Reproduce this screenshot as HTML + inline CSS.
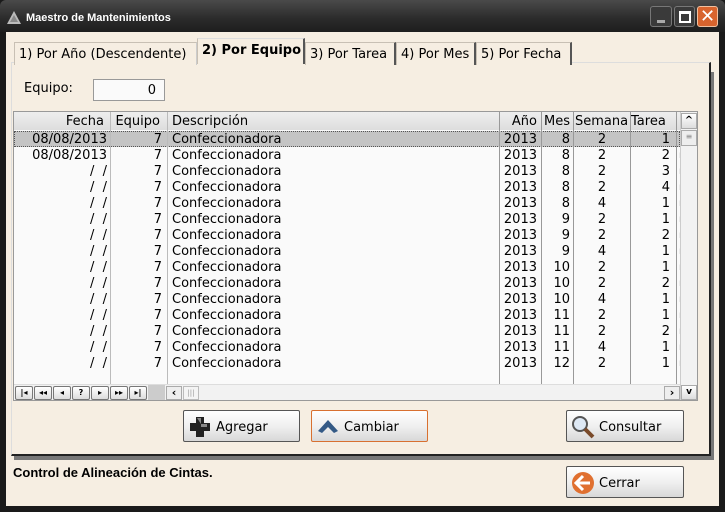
<!DOCTYPE html>
<html><head><meta charset="utf-8"><style>
*{margin:0;padding:0;box-sizing:border-box}
body{width:725px;height:512px;overflow:hidden;background:#1a1a1a;font-family:"DejaVu Sans","Liberation Sans",sans-serif;font-size:12px;color:#000;position:relative}
.a{position:absolute}
.title{left:0;top:0;width:725px;height:32px;background:linear-gradient(#4a4a4a,#2a2a2a 60%,#1e1e1e);border-radius:6px 6px 0 0}
.client{left:6px;top:32px;width:713px;height:474px;background:#f6eee2}
.tab{top:40px;height:23px;border:1px solid #c8c0b4;border-bottom:none;background:#f6eee2;padding:4px 4px 0;font-size:13px;white-space:nowrap;border-right:2px solid #555}
.btn{height:32px;border:1px solid #555;border-radius:2px;background:linear-gradient(#fff,#f0f0f0 50%,#d8d8d8);font-size:13px;padding:9px 0 0 0}
.row{position:absolute;left:14px;width:666px;height:16px;font-size:13px;overflow:hidden}
.c{position:absolute;top:1px;height:16px;line-height:16px;white-space:pre}
.nb{position:absolute;top:386px;width:18px;height:14px;border:1px solid #777;border-radius:2px;background:linear-gradient(#fff,#ddd);font-size:8px;text-align:center;line-height:12px;font-weight:bold}
</style></head><body>
<div class="a title"></div>
<svg class="a" style="left:7px;top:11px" width="14" height="13"><polygon points="7,0 14,13 0,13" fill="#bbb"/><polygon points="7,4 11,11 3,11" fill="#888"/></svg>
<div class="a" style="left:26px;top:12px;color:#fff;font-size:11px;font-weight:bold;font-family:'Liberation Sans',sans-serif">Maestro de Mantenimientos</div>
<div class="a" style="left:650px;top:6px;width:22px;height:21px;border:1px solid #777;border-radius:3px;background:#3a3a3a"><div class="a" style="left:6px;top:13px;width:8px;height:3px;background:#aaa"></div></div>
<div class="a" style="left:674px;top:6px;width:21px;height:21px;border:1px solid #777;border-radius:3px;background:#3a3a3a"><div class="a" style="left:4px;top:4px;width:12px;height:12px;border:2px solid #fff;border-top-width:3px"></div></div>
<div class="a" style="left:697px;top:6px;width:21px;height:21px;border:1px solid #f0c0a0;border-radius:3px;background:#d8642e;color:#fff;font-size:18px;font-weight:bold;text-align:center;line-height:19px">✕</div>
<div class="a client"></div>
<div class="a" style="left:14px;top:72px;width:700px;height:388px;background:#777"></div>
<div class="a" style="left:11px;top:62px;width:700px;height:394px;background:#f6eee2;border:1px solid #ddd;border-right:2px solid #222;border-bottom:2px solid #222"></div>
<div class="a tab" style="left:14px;top:42px;width:183px;border-right:1px solid #ccc">1) Por Año (Descendente)</div>
<div class="a tab" style="left:197px;top:38px;width:108px;height:26px;font-weight:bold;border-top:1px solid #ddd">2) Por Equipo</div>
<div class="a tab" style="left:305px;top:42px;width:91px">3) Por Tarea</div>
<div class="a tab" style="left:396px;top:42px;width:80px">4) Por Mes</div>
<div class="a tab" style="left:476px;top:42px;width:96px">5) Por Fecha</div>
<div class="a" style="left:24px;top:81px;font-size:13px">Equipo:</div>
<div class="a" style="left:93px;top:79px;width:72px;height:22px;border:1px solid #999;background:#fafafa;text-align:right;padding:3px 8px;font-size:13px">0</div>
<div class="a" style="left:13px;top:111px;width:685px;height:290px;border:1px solid #999;background:#fafafa"></div>
<div class="a" style="left:14px;top:112px;width:666px;height:18px;background:linear-gradient(#eee,#ddd)"></div>
<div class="row" style="top:113px">
<div class="c" style="left:0;width:90px;text-align:right">Fecha</div>
<div class="c" style="left:96px;width:50px;text-align:right">Equipo</div>
<div class="c" style="left:158px">Descripción</div>
<div class="c" style="left:483px;width:40px;text-align:right">Año</div>
<div class="c" style="left:520px;width:36px;text-align:right">Mes</div>
<div class="c" style="left:561px">Semana</div>
<div class="c" style="left:617px">Tarea</div>
<div class="c" style="left:665px">|</div>
</div>
<div class="a" style="left:14px;top:131px;width:666px;height:16px;background:#c4c4c4;border:1px dotted #555"></div>
<div class="a" style="left:110px;top:112px;width:1px;height:272px;background:#bbb"></div>
<div class="a" style="left:167px;top:112px;width:1px;height:272px;background:#bbb"></div>
<div class="a" style="left:499px;top:112px;width:1px;height:272px;background:#999"></div>
<div class="a" style="left:541px;top:112px;width:1px;height:272px;background:#999"></div>
<div class="a" style="left:573px;top:112px;width:1px;height:272px;background:#999"></div>
<div class="a" style="left:630px;top:112px;width:1px;height:272px;background:#999"></div>
<div class="a" style="left:676px;top:112px;width:1px;height:272px;background:#999"></div>
<div id="rows"></div>
<script>
var d=[["08/08/2013",8,2,1],["08/08/2013",8,2,2],["/  /",8,2,3],["/  /",8,2,4],["/  /",8,4,1],["/  /",9,2,1],["/  /",9,2,2],["/  /",9,4,1],["/  /",10,2,1],["/  /",10,2,2],["/  /",10,4,1],["/  /",11,2,1],["/  /",11,2,2],["/  /",11,4,1],["/  /",12,2,1]];
var h="";d.forEach(function(r,i){h+='<div class="row" style="top:'+(131+i*16)+'px"><div class="c" style="left:0;width:93px;text-align:right">'+r[0]+'</div><div class="c" style="left:96px;width:52px;text-align:right">7</div><div class="c" style="left:158px">Confeccionadora</div><div class="c" style="left:471px;width:52px;text-align:right">2013</div><div class="c" style="left:513px;width:43px;text-align:right">'+r[1]+'</div><div class="c" style="left:560px;width:56px;text-align:center">'+r[2]+'</div><div class="c" style="left:601px;width:55px;text-align:right">'+r[3]+'</div><div class="c" style="left:665px;font-size:10px">'+(i==0?'':'ı')+'</div></div>';});
document.getElementById("rows").innerHTML=h;
</script>
<div class="a" style="left:680px;top:112px;width:17px;height:288px;background:#f2f2f2;border-left:1px solid #ccc"></div>
<div class="a" style="left:681px;top:113px;width:16px;height:16px;border:1px solid #aaa;background:linear-gradient(#fff,#ddd);font-size:10px;text-align:center;line-height:14px;font-weight:bold">^</div>
<div class="a" style="left:681px;top:130px;width:16px;height:16px;border:1px solid #aaa;background:#eee;font-size:8px;text-align:center;line-height:12px;color:#888">≡</div>
<div class="a" style="left:681px;top:385px;width:16px;height:15px;border:1px solid #aaa;background:linear-gradient(#fff,#ddd);font-size:9px;text-align:center;line-height:12px;font-weight:bold">v</div>
<div class="a" style="left:14px;top:384px;width:666px;height:16px;background:#f2f2f2;border-top:1px solid #ddd"></div>
<div class="a" style="left:148px;top:385px;width:17px;height:15px;background:#ccc"></div>
<div class="nb" style="left:15px">|◂</div><div class="nb" style="left:34px">◂◂</div><div class="nb" style="left:53px">◂</div><div class="nb" style="left:72px">?</div><div class="nb" style="left:91px">▸</div><div class="nb" style="left:110px">▸▸</div><div class="nb" style="left:129px">▸|</div>
<div class="a" style="left:166px;top:386px;width:16px;height:14px;border:1px solid #aaa;background:#eee;font-size:11px;text-align:center;line-height:12px;font-weight:bold">‹</div>
<div class="a" style="left:183px;top:386px;width:16px;height:14px;border:1px solid #bbb;background:#f4f4f4;font-size:7px;text-align:center;line-height:12px;color:#999">|||</div>
<div class="a" style="left:664px;top:386px;width:16px;height:14px;border:1px solid #aaa;background:#eee;font-size:11px;text-align:center;line-height:12px;font-weight:bold">›</div>
<div class="a btn" style="left:183px;top:410px;width:117px"><svg class="a" style="left:4px;top:4px" width="24" height="24"><path d="M8 2h8v6h6v8h-6v6h-8v-6h-6v-8h6z" fill="#222"/><path d="M9 3h4v6h6v3h-6v-3z" fill="#888"/></svg><span style="position:absolute;left:32px">Agregar</span></div>
<div class="a btn" style="left:311px;top:410px;width:117px;border-color:#d87030"><svg class="a" style="left:4px;top:6px" width="24" height="18"><path d="M2 14 L12 3 L22 14 L18 16 L12 10 L6 16Z" fill="#345a86"/></svg><span style="position:absolute;left:32px">Cambiar</span></div>
<div class="a btn" style="left:566px;top:410px;width:118px"><svg class="a" style="left:3px;top:3px" width="26" height="26"><circle cx="10" cy="10" r="7" fill="#dde8f4" stroke="#555" stroke-width="2"/><path d="M15 15 L23 23" stroke="#7a4a2a" stroke-width="4"/></svg><span style="position:absolute;left:32px">Consultar</span></div>
<div class="a" style="left:13px;top:465px;font-size:13px;font-weight:bold;font-family:'Liberation Sans',sans-serif">Control de Alineación de Cintas.</div>
<div class="a btn" style="left:566px;top:466px;width:118px"><svg class="a" style="left:3px;top:3px" width="26" height="26"><circle cx="13" cy="13" r="11" fill="#e07030"/><path d="M13 6 L6 13 L13 20 M6 13 H20" stroke="#fff" stroke-width="3" fill="none"/></svg><span style="position:absolute;left:32px">Cerrar</span></div>
</body></html>
